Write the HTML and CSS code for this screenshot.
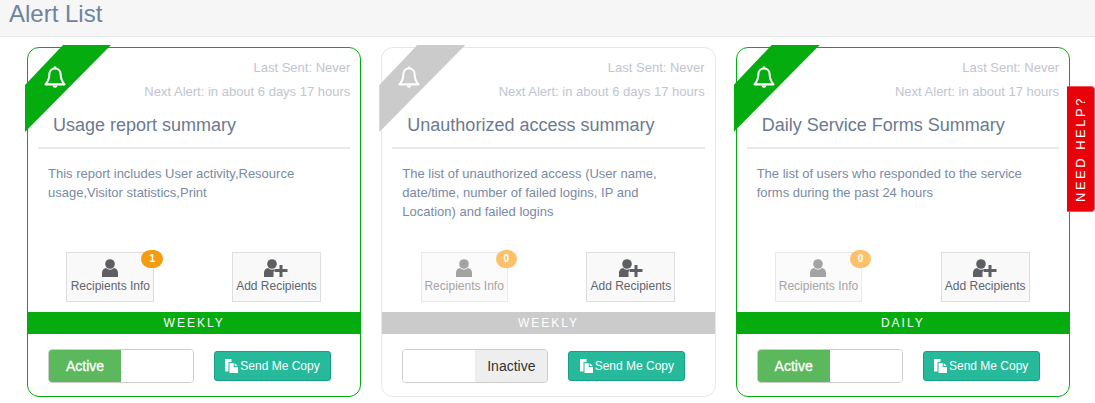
FILE: index.html
```html
<!DOCTYPE html>
<html lang="en">
<head>
<meta charset="utf-8">
<title>Alert List</title>
<link rel="stylesheet" href="styles.css">
</head>
<body>
<svg class="sprite" aria-hidden="true">
  <symbol id="bell" viewBox="0 0 20 23"><path d="M10 3.2c-3.4 0-5.2 2.6-5.2 5.6 0 4.400-1.300 6.600-3.600 9h17.600c-2.300-2.400-3.600-4.600-3.600-9 0-3-1.800-5.600-5.200-5.600z" fill="none" stroke="currentColor" stroke-width="1.900" stroke-linejoin="round"/><path d="M8.500 2.600a1.500 1.500 0 0 1 3 0zM7.800 18.800h4.400a2.200 2.200 0 0 1-4.400 0z" fill="currentColor"/></symbol>
  <symbol id="user" viewBox="0 0 16 18"><circle cx="8" cy="5" r="4.800"/><path d="M0 18v-4.200c0-2.600 1.700-4.300 4.200-4.700 1 1 2.300 1.600 3.800 1.600s2.800-.6 3.800-1.600c2.500.4 4.200 2.100 4.200 4.700V18z"/></symbol>
  <symbol id="useradd" viewBox="0 0 24 18"><circle cx="8" cy="5" r="4.800"/><path d="M0 18v-4.200c0-2.600 1.700-4.300 4.200-4.700 1 1 2.300 1.600 3.800 1.600 1 0 1.900-.2 2.700-.7v2.600h-1.200v5.400z"/><path d="M15.500 6h3v4h5v3h-5v5h-3v-5h-4.500v-3h4.500z"/></symbol>
  <symbol id="copy" viewBox="0 0 13 14"><path d="M0 0h6.500v3H3.500v9.500H0z"/><path d="M4.500 4h4.200v4h4.300v6H4.500z"/><path d="M9.700 4.200l3.100 2.900H9.700z"/></symbol>
</svg>

<header class="page-head"><h1 class="page-title">Alert List</h1></header>

<main class="cards">
  <article class="card">
    <div class="ribbon"><svg class="bell"><use href="#bell"/></svg></div>
    <div class="meta"><p>Last Sent: Never</p><p>Next Alert: in about 6 days 17 hours</p></div>
    <h2 class="card-title">Usage report summary</h2>
    <p class="desc">This report includes User activity,Resource usage,Visitor statistics,Print</p>
    <div class="actions">
      <div class="action-cell"><button class="tile"><svg class="ico-user"><use href="#user"/></svg><span>Recipients Info</span><b class="badge">1</b></button></div>
      <div class="action-cell"><button class="tile"><svg class="ico-add"><use href="#useradd"/></svg><span>Add Recipients</span></button></div>
    </div>
    <div class="band">WEEKLY</div>
    <div class="foot">
      <div class="toggle"><span class="t-on">Active</span><span class="t-blank"></span></div>
      <button class="send"><svg class="ico-copy"><use href="#copy"/></svg>Send Me Copy</button>
    </div>
  </article>

  <article class="card off">
    <div class="ribbon"><svg class="bell"><use href="#bell"/></svg></div>
    <div class="meta"><p>Last Sent: Never</p><p>Next Alert: in about 6 days 17 hours</p></div>
    <h2 class="card-title">Unauthorized access summary</h2>
    <p class="desc">The list of unauthorized access (User name, date/time, number of failed logins, IP and Location) and failed logins</p>
    <div class="actions">
      <div class="action-cell"><button class="tile muted"><svg class="ico-user"><use href="#user"/></svg><span>Recipients Info</span><b class="badge">0</b></button></div>
      <div class="action-cell"><button class="tile"><svg class="ico-add"><use href="#useradd"/></svg><span>Add Recipients</span></button></div>
    </div>
    <div class="band">WEEKLY</div>
    <div class="foot">
      <div class="toggle"><span class="t-blank"></span><span class="t-off">Inactive</span></div>
      <button class="send"><svg class="ico-copy"><use href="#copy"/></svg>Send Me Copy</button>
    </div>
  </article>

  <article class="card">
    <div class="ribbon"><svg class="bell"><use href="#bell"/></svg></div>
    <div class="meta"><p>Last Sent: Never</p><p>Next Alert: in about 17 hours</p></div>
    <h2 class="card-title">Daily Service Forms Summary</h2>
    <p class="desc">The list of users who responded to the service forms during the past 24 hours</p>
    <div class="actions">
      <div class="action-cell"><button class="tile muted"><svg class="ico-user"><use href="#user"/></svg><span>Recipients Info</span><b class="badge">0</b></button></div>
      <div class="action-cell"><button class="tile"><svg class="ico-add"><use href="#useradd"/></svg><span>Add Recipients</span></button></div>
    </div>
    <div class="band">DAILY</div>
    <div class="foot">
      <div class="toggle"><span class="t-on">Active</span><span class="t-blank"></span></div>
      <button class="send"><svg class="ico-copy"><use href="#copy"/></svg>Send Me Copy</button>
    </div>
  </article>
</main>

<aside class="help">NEED HELP?</aside>
</body>
</html>
```

FILE: styles.css
```css
* { box-sizing: border-box; }
html, body { margin: 0; padding: 0; height: 100%; overflow: hidden; }
body { background: #fff; font-family: "Liberation Sans", Arial, sans-serif; color: #676a6c; }
p, h1, h2 { margin: 0; font-weight: 400; }
.sprite { display: none; }

.page-head { height: 37px; background: #f6f6f6; border-bottom: 1px solid #e7eaec; padding-left: 9px; }
.page-title { font-size: 24px; line-height: 27px; color: #6d83a0; }

.cards { display: grid; grid-template-columns: repeat(3, 1fr); column-gap: 20px; width: 1070px; padding: 10px 0 0 27px; }

.card { position: relative; height: 350px; background: #fff; border: 1px solid #04ac0f; border-radius: 12px; display: flex; flex-direction: column; }
.card.off { border-color: #e7e7e9; }

.ribbon { position: absolute; top: -3px; left: -3px; width: 86px; height: 87px; background: #04ac0f; clip-path: polygon(38px 0, 86px 0, 0 87px, 0 40px); }
.off .ribbon { background: #cbcbcb; }
.bell { display: block; width: 22px; height: 25px; margin: 20px 0 0 19px; color: #fff; }

.meta { padding: 8px 10px 0 0; text-align: right; font-size: 13px; line-height: 24px; color: #bfc5d1; }
.card-title { margin: 0 10px; padding: 0 0 0 15px; height: 45px; border-bottom: 2px solid #e7eaec; font-size: 18px; line-height: 43px; color: #6b7a90; }
.desc { height: 103px; padding: 15px 30px 0 20px; font-size: 13px; line-height: 19px; color: #7a8aa3; }

.actions { display: grid; grid-template-columns: 1fr 1fr; height: 60px; padding-right: 1px; }
.action-cell { display: flex; justify-content: center; align-items: flex-start; }
.tile { position: relative; display: flex; flex-direction: column; align-items: center; width: 89px; height: 50px; padding: 6px 0 0; background: #f9f9f9; border: 1px solid #ddd; font: 12px/16px "Liberation Sans", Arial, sans-serif; color: #5f6670; }
.action-cell:first-child .tile { width: 88px; margin-right: 1px; }
.action-cell:first-child .tile.muted { width: 87px; margin-right: 2px; color: #a5a5a5; border-color: #e9e9e9; background: #fbfbfb; }
.tile svg { fill: #5d5f63; }
.ico-user { width: 16px; height: 18px; margin-bottom: 1px; }
.ico-add { width: 24px; height: 18px; margin-bottom: 1px; }
.tile.muted svg { fill: #a3a3a3; }
.badge { position: absolute; top: -3px; right: -10px; width: 22px; height: 18px; border-radius: 9px; background: #f39c12; color: #fff; font-size: 10px; line-height: 17px; font-weight: 700; text-align: center; }
.muted .badge { width: 21px; background: #fcc16a; }

.band { height: 22px; background: #04ac0f; color: #fff; text-align: center; font-size: 12px; line-height: 22px; letter-spacing: 2px; }
.off .band { background: #cbcbcb; }

.foot { display: flex; align-items: center; gap: 20px; padding: 15px 0 0 20px; }
.toggle { display: flex; width: 146px; height: 34px; border: 1px solid #ccc; border-radius: 4px; overflow: hidden; font-size: 14px; line-height: 32px; text-align: center; }
.t-on, .t-off, .t-blank { width: 50%; }
.t-on { background: #5cb85c; color: #fff; -webkit-text-stroke: 0.3px #fff; }
.t-off { background: #eee; color: #333; }
.t-blank { background: #fff; }
.send { display: flex; align-items: center; justify-content: center; width: 117px; height: 30px; padding: 0; background: #26b99a; border: 1px solid #169f85; border-radius: 3px; color: #fff; font: 12px "Liberation Sans", Arial, sans-serif; }
.ico-copy { width: 13px; height: 14px; margin-right: 2px; fill: #fff; }

.help { position: absolute; top: 86px; right: 0; width: 28px; height: 126px; padding-right: 1px; background: #e8000b; border: 1px solid #f2545b; border-right: 0; border-radius: 4px 0 0 4px; color: #fff; font-size: 13px; letter-spacing: 2.500px; writing-mode: vertical-rl; transform: rotate(180deg); transform-origin: center; text-align: center; line-height: 26px; }
```
